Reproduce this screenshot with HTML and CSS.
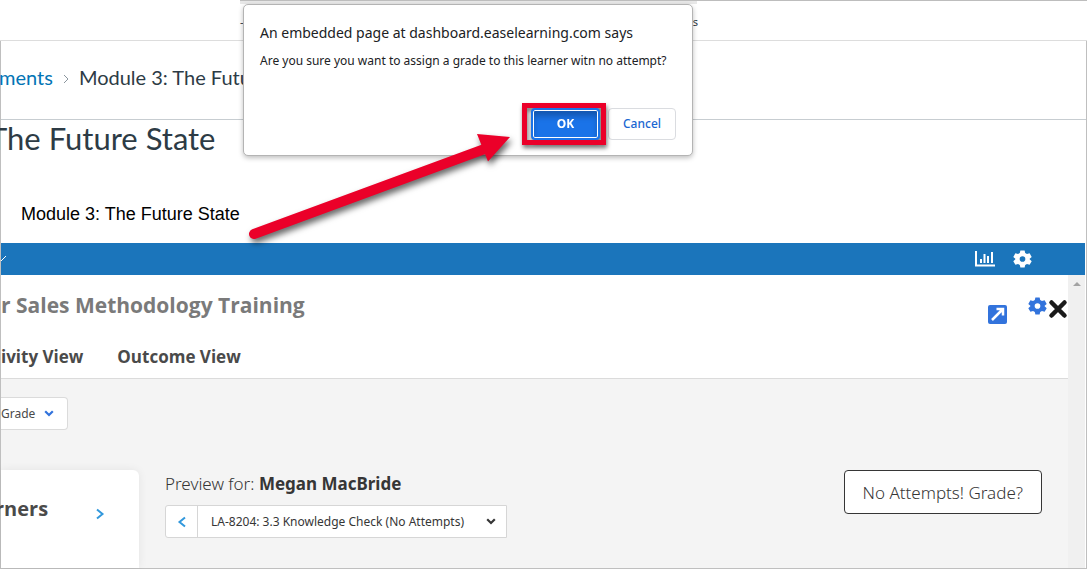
FILE: index.html
```html
<!DOCTYPE html>
<html lang="en">
<head>
<meta charset="utf-8">
<title>Module 3: The Future State</title>
<link rel="stylesheet" href="styles.css">
</head>
<body>
<div class="page">
  <header class="topbar"></header>
  <main class="content">
    <nav class="crumbs" aria-label="Breadcrumb">
      <a class="crumb-link" href="#">ments</a>
      <svg class="crumb-sep" viewBox="0 0 6 10" aria-hidden="true"><path d="M1 1l4 4-4 4"/></svg>
      <span>Module 3: The Futu</span>
    </nav>
    <h1 class="title">The Future State</h1>
    <p class="subtitle">Module 3: The Future State</p>
    <div class="bluebar">
      <svg class="tick" viewBox="0 0 6 8" aria-hidden="true"><path d="M0 6l5-5"/></svg>
      <div class="bar-tools">
        <button class="icon-btn" aria-label="Statistics">
          <svg class="chart" viewBox="0 0 20 16"><path d="M1 0v14.500h19M6 8v4M9.500 3v9M13 5v7M17 1v11"/></svg>
        </button>
        <button class="icon-btn" aria-label="Settings">
          <svg class="gear" viewBox="0 0 24 24"><path fill-rule="evenodd" d="M9 0h6l.8 3.600 2.500 1.500L22 4l3 5-2.900 2.500v1L25 15l-3 5-3.700-1.100-2.500 1.500L15 24H9l-.8-3.600-2.500-1.500L2 20l-3-5 2.900-2.500v-1L-1 9l3-5 3.700 1.100 2.500-1.500zM12 8a4 4 0 1 0 0 8 4 4 0 0 0 0-8z"/></svg>
        </button>
      </div>
    </div>
    <section class="frame">
      <div class="frame-main">
        <div class="course">
          <div class="course-head">
            <h2 class="course-title">r Sales Methodology Training</h2>
            <div class="course-tools">
              <button class="icon-btn popout-btn" aria-label="Open in new window">
                <svg class="popout" viewBox="0 0 19 19"><rect width="19" height="19" rx="2"/><path d="M4 15L14 5M8.500 4H15v6.500"/></svg>
              </button>
              <button class="icon-btn" aria-label="Options">
                <svg class="gear gear-blue" viewBox="0 0 24 24"><path fill-rule="evenodd" d="M9 0h6l.8 3.600 2.500 1.500L22 4l3 5-2.900 2.500v1L25 15l-3 5-3.700-1.100-2.500 1.500L15 24H9l-.8-3.600-2.500-1.500L2 20l-3-5 2.900-2.500v-1L-1 9l3-5 3.700 1.100 2.500-1.500zM12 8a4 4 0 1 0 0 8 4 4 0 0 0 0-8z"/></svg>
              </button>
              <button class="icon-btn close-btn" aria-label="Close">
                <svg class="close" viewBox="0 0 18 18"><path d="M2.500 2.500l13 13M15.500 2.500l-13 13"/></svg>
              </button>
            </div>
          </div>
          <nav class="tabs">
            <a class="tab" href="#">ivity View</a>
            <a class="tab" href="#">Outcome View</a>
          </nav>
        </div>
        <div class="workspace">
          <div class="filter">
            <select class="filter-select" aria-label="Grade"><option>Grade</option></select>
            <svg class="chevron chevron-blue" viewBox="0 0 10 7"><path d="M1.200 1.200L5 5l3.800-3.800"/></svg>
          </div>
          <div class="panels">
            <aside class="learners">
              <h3 class="learners-title">rners</h3>
              <button class="icon-btn" aria-label="Expand learners">
                <svg class="arrow" viewBox="0 0 8 12"><path d="M1 1.500L6.500 6 1 10.500"/></svg>
              </button>
            </aside>
            <div class="preview">
              <p class="preview-for">Preview for: <strong>Megan MacBride</strong></p>
              <div class="picker">
                <button class="prev" aria-label="Previous">
                  <svg class="arrow" viewBox="0 0 8 12"><path d="M7 1.500L1.500 6 7 10.500"/></svg>
                </button>
                <div class="picker-box">
                  <select class="picker-select" aria-label="Activity"><option>LA-8204: 3.3 Knowledge Check (No Attempts)</option></select>
                  <svg class="chevron" viewBox="0 0 10 7"><path d="M1.200 1.200L5 5l3.800-3.800"/></svg>
                </div>
              </div>
            </div>
            <button class="grade-btn">No Attempts! Grade?</button>
          </div>
        </div>
      </div>
      <div class="scrollbar"><span class="scroll-up"></span></div>
    </section>
  </main>

  <div class="backdrop">
    <span class="behind">-</span>
    <span class="behind">ts</span>
  </div>
  <div class="dialog" role="dialog" aria-labelledby="dlg-title">
    <h2 class="dialog-title" id="dlg-title">An embedded page at dashboard.easelearning.com says</h2>
    <p class="dialog-text">Are you sure you want to assign a grade to this learner witn no attempt?</p>
    <div class="dialog-actions">
      <div class="highlight"><button class="ok">OK</button></div>
      <button class="cancel">Cancel</button>
    </div>
  </div>
  <svg class="pointer" viewBox="0 0 280 130" aria-hidden="true">
    <path class="pointer-line" d="M14 114L250 27"/>
    <path class="pointer-head" d="M270 17L237 14l11 27.500z"/>
  </svg>
</div>
</body>
</html>
```
FILE: styles.css
```css
* { box-sizing: border-box; }
body { margin: 0; background: #fff; color: #2d3b45; font-family: "Noto Sans", "Open Sans", sans-serif; }
h1, h2, h3, p { margin: 0; }
button, select { font-family: inherit; margin: 0; }
svg { display: block; flex: none; overflow: visible; }
a { text-decoration: none; }

.page { position: relative; display: flex; flex-direction: column; min-height: 100vh; overflow: hidden; }
.topbar { height: 41px; border-bottom: 1px solid #ddd; }
.content { flex: 1; display: flex; flex-direction: column; border: solid #bfbfbf; border-width: 0 1px 1px; }

.crumbs { display: flex; align-items: center; gap: 10px; height: 79px; padding-bottom: 6px; border-bottom: 1px solid #c7cdd1; font: 20px/24px Lato, sans-serif; }
.crumb-link { margin-left: -2px; color: #0374b5; }
.crumb-sep { width: 6px; height: 10px; margin-top: 3px; fill: none; stroke: #8b969e; stroke-width: 1; }
.title { margin-left: -12px; font: 400 31px/37px Lato, sans-serif; }
.subtitle { padding: 47px 20px 19px; font: 18px/20px "Liberation Sans", Arial, sans-serif; color: #000; }

.bluebar { display: flex; align-items: center; justify-content: space-between; height: 32px; margin-right: 1px; padding-right: 54px; background: #1b75bb; }
.tick { width: 6px; height: 8px; fill: none; stroke: #fff; stroke-width: 1; }
.bar-tools { display: flex; align-items: center; gap: 19px; }
.icon-btn { display: block; padding: 0; border: 0; background: none; }
.chart { width: 20px; height: 16px; fill: none; stroke: #fff; stroke-width: 2; }
.gear { width: 17px; height: 18px; fill: #fff; }

.frame { flex: 1; display: flex; margin-right: 1px; }
.frame-main { flex: 1; min-width: 0; display: flex; flex-direction: column; }
.scrollbar { width: 17px; padding-top: 7px; background: #f0f0f0; }
.scroll-up { display: block; width: 8px; margin: 0 auto; border: solid transparent; border-width: 0 4px 4px; border-bottom-color: #a3a3a3; }
.course { display: flex; flex-direction: column; justify-content: space-between; height: 104px; border-bottom: 1px solid #dbdbdb; }
.course-head { display: flex; justify-content: space-between; padding-top: 15px; }
.course-title { font-family: "Open Sans", sans-serif; font-size: 21px; line-height: 30px; color: #7a7a7a; }
.course-tools { display: flex; align-items: flex-start; padding: 7px 1px 0 0; }
.popout-btn { margin: 8px 22px 0 0; }
.popout { width: 19px; height: 19px; }
.popout rect { fill: #3273dc; }
.popout path { fill: none; stroke: #fff; stroke-width: 2.500; }
.gear-blue { fill: #3273dc; }
.close-btn { margin: 3px 0 0 3px; }
.close { width: 18px; height: 18px; fill: none; stroke: #1a1a1a; stroke-width: 4.500; stroke-linecap: round; }
.tabs { display: flex; gap: 34px; padding-bottom: 9px; }
.tab { font-family: "Open Sans", sans-serif; font-size: 17px; line-height: 24px; font-weight: 700; color: #4a4a4a; }

.workspace { flex: 1; display: flex; flex-direction: column; background: #f4f4f4; }
.filter { position: relative; display: flex; align-items: center; width: 67px; height: 33px; margin-top: 18px; }
.filter-select { appearance: none; width: 100%; height: 100%; padding: 0; border: 1px solid #dbdbdb; border-left: 0; border-radius: 0 4px 4px 0; background: #fff; font-size: 12px; color: #4a4a4a; }
.chevron { position: absolute; right: 10px; width: 10px; height: 7px; fill: none; stroke: #363636; stroke-width: 2.200; pointer-events: none; }
.chevron-blue { right: 14px; stroke: #3273dc; }
.panels { flex: 1; display: flex; align-items: flex-start; padding: 40px 26px 0 0; }
.learners { display: flex; align-self: stretch; align-items: flex-start; justify-content: space-between; width: 138px; padding: 24px 35px 0 0; border-radius: 0 6px 0 0; background: #fff; box-shadow: 0 0 10px rgba(10,10,10,.07); }
.learners-title { margin-left: -6px; font-family: "Open Sans", sans-serif; font-size: 20px; line-height: 30px; color: #4a4a4a; }
.learners .icon-btn { margin-top: 14px; }
.arrow { width: 8px; height: 12px; fill: none; stroke: #3298dc; stroke-width: 2; }
.preview { flex: 1; padding-left: 26px; }
.preview-for { font-size: 17px; line-height: 28px; font-weight: 300; color: #363636; }
.preview-for strong { font-weight: 700; }
.picker { display: flex; width: 342px; height: 33px; margin-top: 7px; border: 1px solid #d6d6d6; border-radius: 3px 0 0 3px; background: #fff; }
.prev { display: flex; align-items: center; justify-content: center; width: 32px; padding: 0; border: 0; border-right: 1px solid #d6d6d6; background: none; }
.picker-box { position: relative; flex: 1; display: flex; align-items: center; }
.picker-select { appearance: none; width: 100%; height: 100%; padding: 0 0 0 13px; border: 0; background: none; font-size: 12px; color: #363636; }
.grade-btn { height: 44px; padding: 0 18px; border: 1px solid #363636; border-radius: 4px; background: #fff; font-size: 17px; font-weight: 300; color: #363636; }

.backdrop { position: absolute; top: 0; left: 240px; right: 0; display: flex; justify-content: space-between; height: 30px; padding: 14px 389px 0 0; border-top: 1px solid #bdbdbd; }
.backdrop::before { content: ""; position: absolute; top: 0; left: 0; width: 457px; height: 3px; background: #e8e8e8; }
.behind { font-size: 11px; line-height: 13px; color: #2d3b45; }

.dialog { position: absolute; top: 4px; left: 243px; width: 450px; height: 152px; padding: 17px 16px 0; border: 1px solid #b4b4b4; border-radius: 5px; background: #fff; box-shadow: 0 2px 5px rgba(0,0,0,.25); color: #202124; }
.dialog-title { font-size: 14px; line-height: 22px; font-weight: 400; white-space: nowrap; }
.dialog-text { margin-top: 8px; font-size: 12px; line-height: 18px; white-space: nowrap; }
.dialog-actions { display: flex; align-items: center; justify-content: flex-end; gap: 2px; margin-top: 33px; }
.highlight { width: 84px; padding: 0 1px 0 4px; border: 5px solid #eb0029; height: 42px; filter: drop-shadow(1px 3px 2px rgba(0,0,0,.55)); }
.ok { width: 69px; height: 32px; padding: 0 0 2px; border: 2px solid #1a73e8; border-radius: 4px; background: #1a73e8; box-shadow: inset 0 0 0 1px #fff, inset 0 6px 6px rgba(0,0,0,.25); color: #fff; font-size: 12px; font-weight: 700; }
.cancel { width: 68px; height: 32px; padding: 0 0 2px; border: 1px solid #dadce0; border-radius: 4px; background: #fff; color: #1a67d2; font-size: 12px; font-weight: 500; }
.pointer { position: absolute; top: 120px; left: 240px; width: 280px; height: 130px; filter: drop-shadow(2px 4px 3px rgba(0,0,0,.6)); pointer-events: none; }
.pointer-line { fill: none; stroke: #eb0029; stroke-width: 10; stroke-linecap: round; }
.pointer-head { fill: #eb0029; }
```
